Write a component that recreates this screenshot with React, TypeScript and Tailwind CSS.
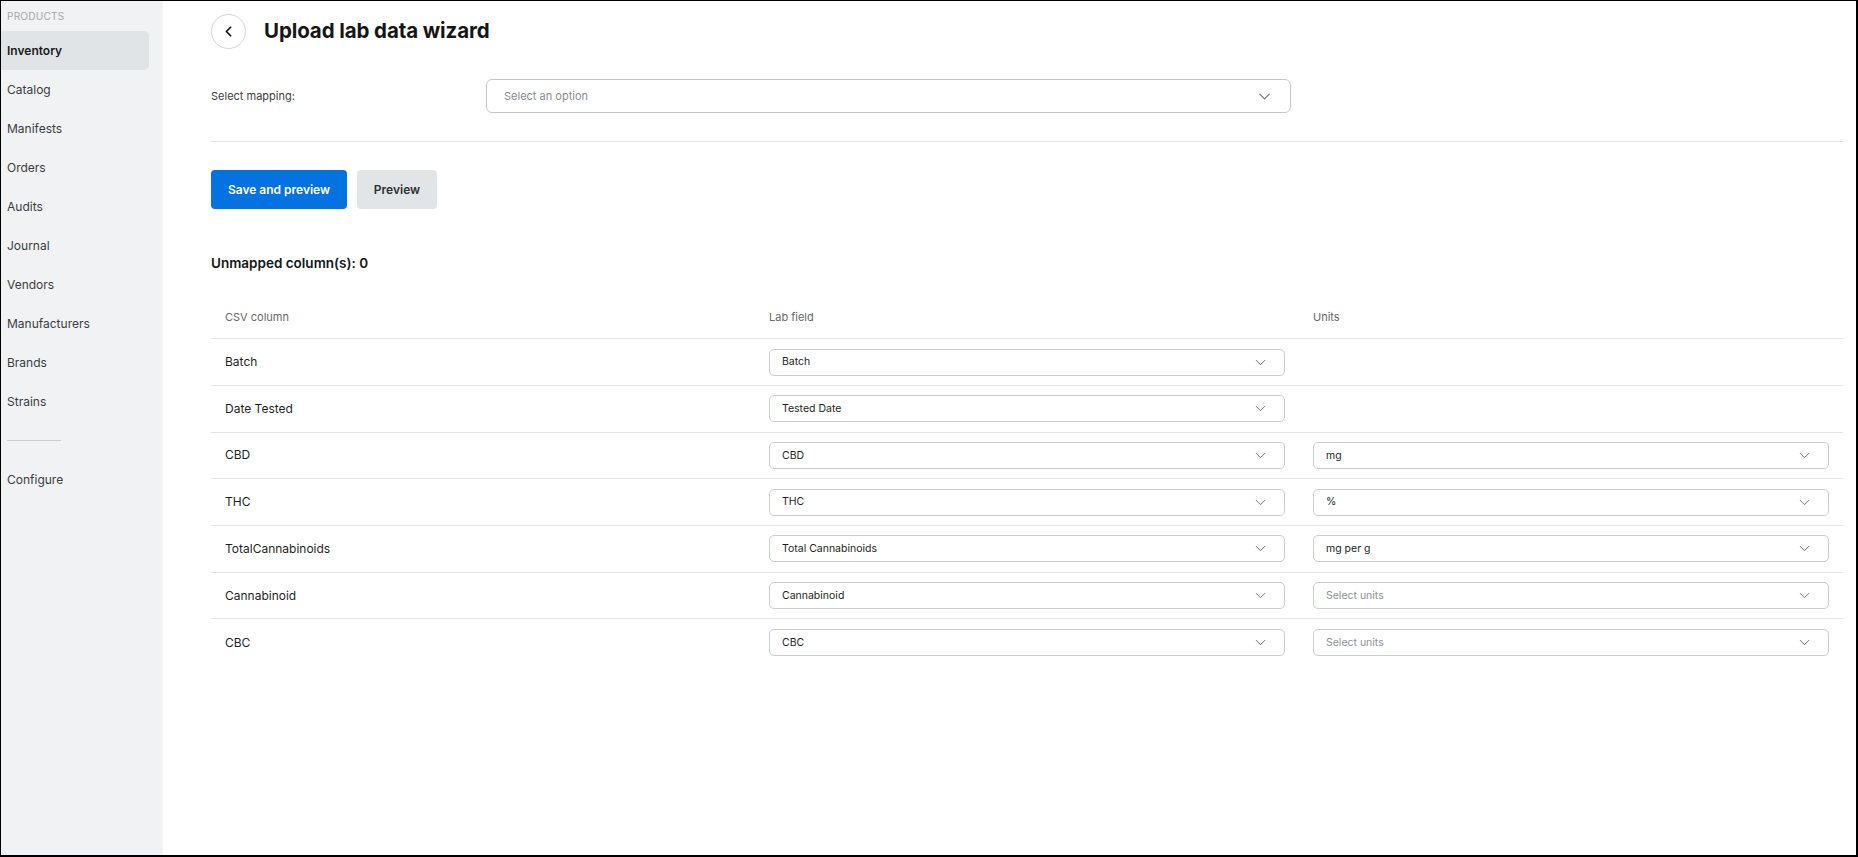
import { ChevronDown, ChevronLeft } from 'lucide-react';

const navItems = ['Inventory', 'Catalog', 'Manifests', 'Orders', 'Audits', 'Journal', 'Vendors', 'Manufacturers', 'Brands', 'Strains'];

const rows = [
  { csv: 'Batch', field: 'Batch', units: null },
  { csv: 'Date Tested', field: 'Tested Date', units: null },
  { csv: 'CBD', field: 'CBD', units: 'mg' },
  { csv: 'THC', field: 'THC', units: '%' },
  { csv: 'TotalCannabinoids', field: 'Total Cannabinoids', units: 'mg per g' },
  { csv: 'Cannabinoid', field: 'Cannabinoid', units: '' },
  { csv: 'CBC', field: 'CBC', units: '' },
];

function RowSelect({ value, placeholder }: { value: string; placeholder: string }) {
  return (
    <div className="h-[27px] w-full flex items-center justify-between pl-[12px] pr-[15px] border border-[#c9cdd1] rounded-[5px] bg-white">
      <span className={`text-[10.5px] ${value ? 'text-[#1f1f1f]' : 'text-[#8d9196]'}`}>{value || placeholder}</span>
      <ChevronDown size={17} strokeWidth={1.4} className="text-[#6c7176]" />
    </div>
  );
}

export default function App() {
  return (
    <div
      className="h-[857px] w-[1858px] flex border-l border-t border-r-2 border-b-2 border-black bg-white text-[#1f1f1f] overflow-hidden"
      style={{ fontFamily: 'Inter, "Noto Sans", sans-serif' }}
    >
      <aside className="w-[162px] shrink-0 bg-[#f1f2f4] pr-[14px]">
        <div className="h-[30px] flex items-center pl-[6px] text-[10px] tracking-wide text-[#a3a7ab] uppercase">Products</div>
        <nav className="flex flex-col">
          {navItems.map((item, i) => (
            <div
              key={item}
              className={`h-[39px] flex items-center pl-[6px] text-[12px] rounded-r-[5px] ${i === 0 ? 'bg-[#e1e4e6] font-semibold text-[#1a1a1a]' : 'text-[#3a3d40]'}`}
            >
              {item}
            </div>
          ))}
        </nav>
        <div className="ml-[6px] my-[19px] w-[54px] border-t border-[#c9ccd0]"></div>
        <div className="h-[39px] flex items-center pl-[6px] text-[12px] text-[#3a3d40]">Configure</div>
      </aside>

      <main className="flex-1 pl-[48px] pr-[13px] pt-[13px]">
        <div className="flex items-center gap-[18px]">
          <button className="w-[35px] h-[35px] rounded-full border border-[#d3d6d9] flex items-center justify-center bg-white">
            <ChevronLeft size={17} strokeWidth={2.4} className="text-[#111]" />
          </button>
          <h1 className="text-[20.5px] font-bold tracking-[-0.1px] text-[#161616]">Upload lab data wizard</h1>
        </div>

        <div className="mt-[30px] flex items-center">
          <label className="w-[275px] text-[11px] text-[#3c3f42]">Select mapping:</label>
          <div className="w-[805px] h-[34px] flex items-center justify-between pl-[17px] pr-[16px] border border-[#c3c7cb] rounded-[6px]">
            <span className="text-[11px] text-[#878b90]">Select an option</span>
            <ChevronDown size={19} strokeWidth={1.4} className="text-[#6c7176]" />
          </div>
        </div>

        <div className="mt-[28px] border-t border-[#dfe1e3]"></div>

        <div className="mt-[28px] flex gap-[10px]">
          <button className="h-[39px] w-[136px] rounded-[4px] bg-[#0473e1] text-white text-[12px] font-semibold">Save and preview</button>
          <button className="h-[39px] w-[80px] rounded-[4px] bg-[#e2e5e7] text-[#2e3134] text-[12px] font-semibold">Preview</button>
        </div>

        <div className="mt-[44px] text-[13.5px] font-semibold text-[#161616]">Unmapped column(s): 0</div>

        <div className="mt-[22px] grid grid-cols-3">
          <div className="col-span-3 grid grid-cols-3 h-[44px] items-center border-b border-[#e2e4e6] text-[11px] text-[#66696d]">
            <div className="px-[14px]">CSV column</div>
            <div className="px-[14px]">Lab field</div>
            <div className="px-[14px]">Units</div>
          </div>
          {rows.map((r, i) => (
            <div
              key={r.csv}
              className={`col-span-3 grid grid-cols-3 h-[46.7px] items-center ${i < rows.length - 1 ? 'border-b border-[#e2e4e6]' : ''}`}
            >
              <div className="px-[14px] text-[12px]">{r.csv}</div>
              <div className="px-[14px]">
                <RowSelect value={r.field} placeholder="Select field" />
              </div>
              <div className="px-[14px]">
                {r.units !== null && <RowSelect value={r.units} placeholder="Select units" />}
              </div>
            </div>
          ))}
        </div>
      </main>
    </div>
  );
}
